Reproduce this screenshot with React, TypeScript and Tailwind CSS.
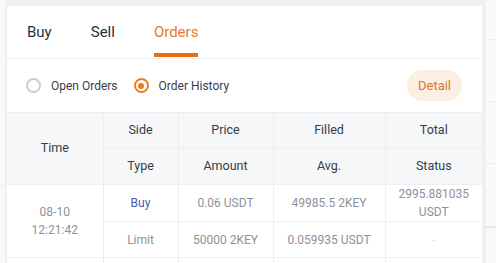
export default function App() {
  const cell = "border border-[#eceef1] text-center align-middle";
  return (
    <div
      className="w-[496px] h-[263px] overflow-hidden bg-[#eff0f3] flex text-[12px]"
      style={{ fontFamily: "Roboto, 'Noto Sans', sans-serif" }}
    >
      {/* left neighbour panel */}
      <div className="w-[5px] shrink-0 bg-[#f8f9fa] flex flex-col">
        <div className="h-[186px] shrink-0 border-b border-[#e9eaee]" />
      </div>
      <div className="w-[2px] shrink-0" />

      {/* main panel */}
      <div className="mt-[6px] w-[475px] shrink-0 bg-white flex flex-col">
        {
          // tabs
          <div className="h-[53px] shrink-0 flex items-end gap-[39px] px-[20px] border-b border-[#eeeff2] text-[15px]">
            <div className="pb-[15px] text-[#27303b]">Buy</div>
            <div className="pb-[15px] text-[#27303b]">Sell</div>
            <div className="relative pb-[15px] text-[#e8792a]">
              Orders
              <div className="absolute left-0 right-0 bottom-[1px] h-[4px] bg-[#e56f12]" />
            </div>
          </div>
        }
        {
          // filters
          <div className="h-[53px] shrink-0 flex items-center px-[19px] text-[#3a404a]">
            <div className="flex items-center gap-[10px]">
              <div className="w-[15px] h-[15px] rounded-full border-2 border-[#c9ccd2]" />
              <span>Open Orders</span>
            </div>
            <div className="flex items-center gap-[10px] ml-[16px]">
              <div className="w-[15px] h-[15px] rounded-full border-2 border-[#ec7a1c] flex items-center justify-center">
                <div className="w-[6px] h-[6px] rounded-full bg-[#ec7a1c]" />
              </div>
              <span>Order History</span>
            </div>
            <button className="ml-auto mr-[1px] h-[31px] w-[55px] rounded-full bg-[#fdeee2] text-[#d8772e] text-[13px]">
              Detail
            </button>
          </div>
        }
        {
          // table
          <table className="w-full shrink-0 border-collapse table-fixed">
            <colgroup>
              <col className="w-[96px]" />
              <col className="w-[75px]" />
              <col className="w-[95px]" />
              <col className="w-[112px]" />
              <col />
            </colgroup>
            <thead className="bg-[#f6f7f9] text-[#353c47] text-[12.5px]">
              <tr className="h-[36px]">
                <td rowSpan={2} className={cell + " border-l-0"}>Time</td>
                <td className={cell}>Side</td>
                <td className={cell}>Price</td>
                <td className={cell}>Filled</td>
                <td className={cell + " border-r-0"}>Total</td>
              </tr>
              <tr className="h-[36px]">
                <td className={cell}>Type</td>
                <td className={cell}>Amount</td>
                <td className={cell}>Avg.</td>
                <td className={cell + " border-r-0"}>Status</td>
              </tr>
            </thead>
            <tbody className="text-[#8d929a] leading-[18px]">
              <tr className="h-[36px]">
                <td rowSpan={2} className={cell + " border-l-0"}>
                  08-10
                  <br />
                  12:21:42
                </td>
                <td className={cell + " text-[#4a57ad]"}>Buy</td>
                <td className={cell}>0.06 USDT</td>
                <td className={cell}>49985.5 2KEY</td>
                <td className={cell + " border-r-0"}>
                  2995.881035
                  <br />
                  USDT
                </td>
              </tr>
              <tr className="h-[36px]">
                <td className={cell}>Limit</td>
                <td className={cell}>50000 2KEY</td>
                <td className={cell}>0.059935 USDT</td>
                <td className={cell + " border-r-0 text-[#e4e6ea]"}>-</td>
              </tr>
              <tr className="h-[36px]">
                <td className={cell + " border-l-0"} />
                <td className={cell} />
                <td className={cell} />
                <td className={cell} />
                <td className={cell + " border-r-0"} />
              </tr>
            </tbody>
          </table>
        }
      </div>

      <div className="w-[4px] shrink-0" />
      {/* right neighbour panel */}
      <div className="flex-1 bg-[#fafafb] flex flex-col">
        <div className="h-[40px] shrink-0 border-b border-[#eeeff1]" />
        <div className="h-[62px] shrink-0 border-b border-[#eeeff1]" />
        <div className="h-[62px] shrink-0 border-b border-[#eeeff1]" />
        <div className="h-[64px] shrink-0 border-b-2 border-[#e6e7ea]" />
      </div>
    </div>
  );
}
